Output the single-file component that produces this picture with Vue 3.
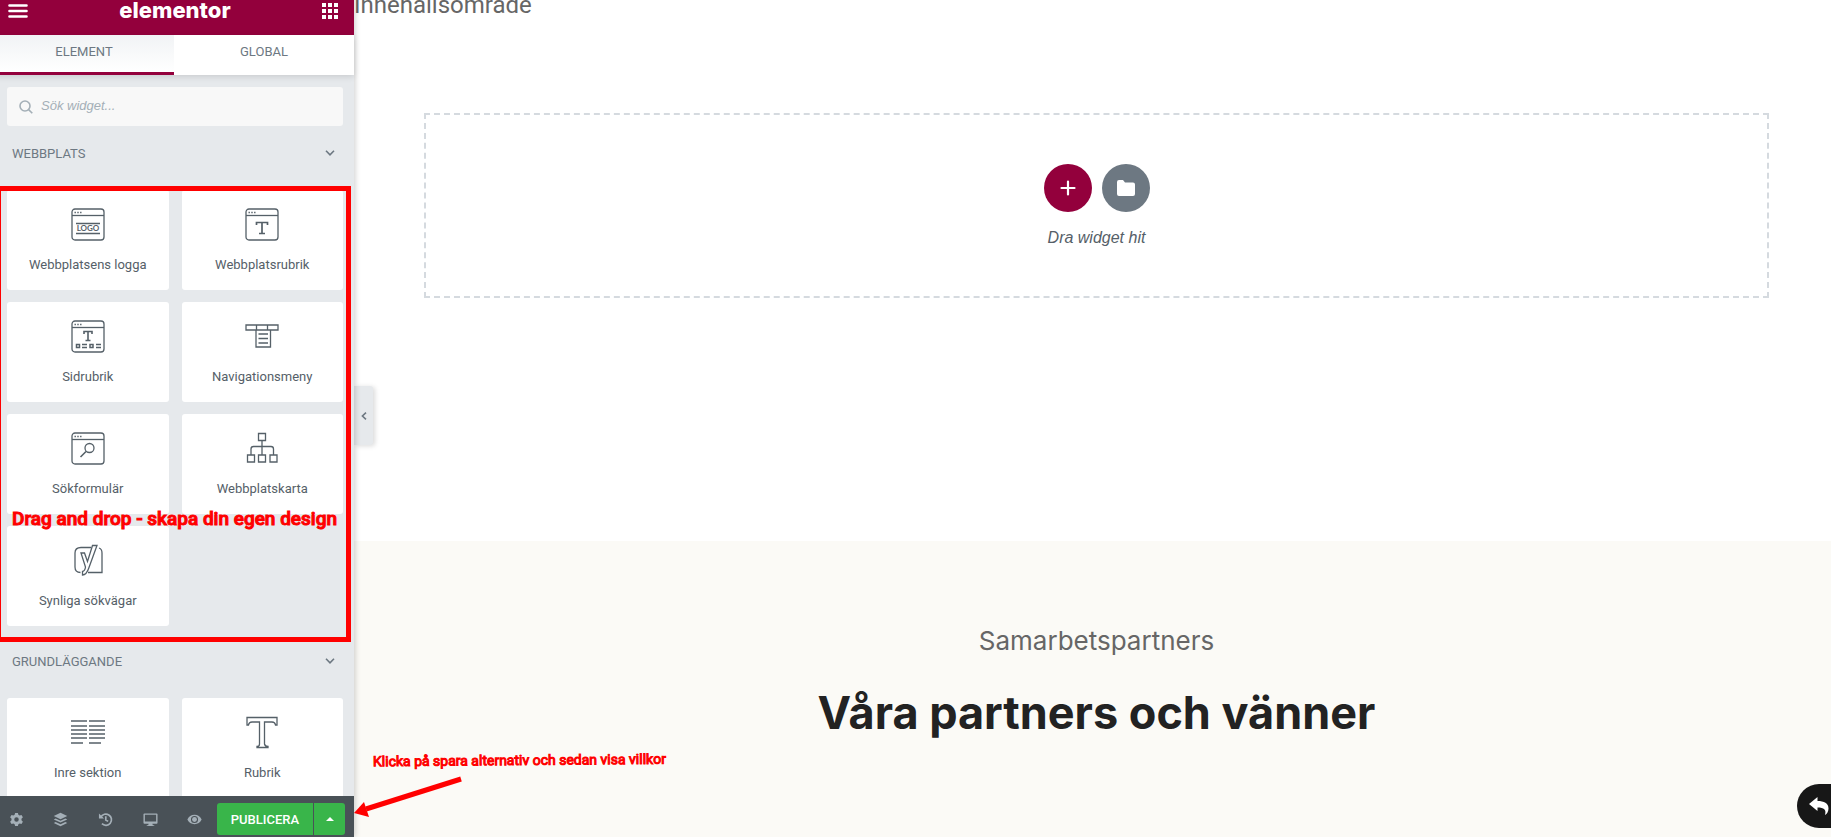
<script setup>
  import { ref } from 'vue'
  import { computed } from 'vue'

  const activeTab = ref('element')
  const searchQuery = ref('')

  // browser window outline shared by several widget icons
  const frame = '<rect x="1" y="1" width="32" height="31" rx="3"/><path d="M1 7.5H33"/><path d="M3.5 4.5h1.4M6.3 4.5h1.4M9.1 4.5h1.4"/>'
  const serifT = 'M11.5 17V14.5H22.500V17M17 14.500V25.500M14 25.500H20'

  const icons = {
    logo: frame + '<path d="M5 15.500H29M5 25.500H29"/><text x="17" y="23.200" text-anchor="middle" font-family="Lato, sans-serif" font-size="8" font-weight="700" fill="#556068" stroke="none">LOGO</text>',
    title: frame + `<path stroke-width="1.700" d="${serifT}"/>`,
    page: frame + '<path stroke-width="1.600" d="M13 14V11.500H21V14M17 11.500V20.500M14.500 20.500H19.500"/><path stroke-width="1.500" d="M5.500 24.500h3v3h-3zM19 24.500h3v3h-3zM11 24.500h5M11 27.500h5M25 24.500h5M25 27.500h5"/>',
    nav: '<path d="M1 5H33V10H1zM11.500 5V10M22.500 5V10M11 10V27H25.500V10M13.500 14H23M13.500 18.500H23M13.500 23H23"/>',
    search: frame + '<circle cx="18.500" cy="16" r="4.500"/><path stroke-width="1.600" d="M15 19.500L9.500 25"/>',
    sitemap: '<path d="M13.500 1.500h7v7h-7zM2.500 23h7v7h-7zM13.500 23h7v7h-7zM25 23h7v7h-7zM17 8.500V23M6 23V17Q6 14.500 8.500 14.500H26Q28.500 14.500 28.500 17V23"/>',
    yoast: '<path d="M20 3.500H10Q4 3.500 4 9V23Q4 28.500 9.500 28.500M17 28.500H31V9Q31 5 28 4"/><path d="M10 9H13.500L16.500 17.500L21.500 1.500H26L18 23.500Q15.500 31 11.500 31V27.500Q14 27 14.500 23Z"/>',
    columns: '<path d="M0 5H16M0 10H16M0 14H16M0 18H16M0 22H16M0 27H12M18 5H34M18 10H34M18 14H34M18 18H34M18 22H34M18 27H30"/>',
    heading: '<path d="M2 1.500H32V9H30.500Q30 6 27 6H19.500V28Q20 30.500 23 30.500V31.500H12V30.500Q14.500 30.500 14.500 28V6H7Q4 6 3.500 9H2Z"/>'
  }

  const categories = ref([
    {
      name: 'Webbplats',
      widgets: [
        { label: 'Webbplatsens logga', icon: 'logo' },
        { label: 'Webbplatsrubrik', icon: 'title' },
        { label: 'Sidrubrik', icon: 'page' },
        { label: 'Navigationsmeny', icon: 'nav' },
        { label: 'Sökformulär', icon: 'search' },
        { label: 'Webbplatskarta', icon: 'sitemap' },
        { label: 'Synliga sökvägar', icon: 'yoast' }
      ]
    },
    {
      name: 'Grundläggande',
      widgets: [
        { label: 'Inre sektion', icon: 'columns' },
        { label: 'Rubrik', icon: 'heading' }
      ]
    }
  ])

  // show matched widgets
  const filteredCategories = computed(() => {
    const query = searchQuery.value.toLowerCase()
    return categories.value.map((category) => {
      return {
        name: category.name,
        widgets: category.widgets.filter((widget) => widget.label.toLowerCase().includes(query))
      }
    })
  })

  const tools = [
    { name: 'Inställningar', svg: '<path fill-rule="evenodd" d="M6.500 1h3l.5 2 1.300.7 2-.6 1.500 2.600-1.500 1.500v1.600l1.500 1.500-1.500 2.600-2-.6-1.300.7-.5 2h-3l-.5-2-1.300-.7-2 .6-1.500-2.600 1.500-1.500V7.200L1.200 5.700l1.500-2.600 2 .6L6 3zM8 5.600a2.400 2.400 0 1 0 0 4.800 2.400 2.400 0 0 0 0-4.800z"/>' },
    { name: 'Navigator', svg: '<path d="M8 .8L15.200 4.200 8 7.600.8 4.200zM2.800 6.900L8 9.300l5.200-2.400 2 1L8 11.300.8 7.900zM2.800 10.600L8 13l5.200-2.400 2 1L8 15.200.8 11.600z"/>' },
    { name: 'Historik', svg: '<path fill="none" stroke="currentColor" stroke-width="1.800" d="M3 5.500A6 6 0 1 1 4.200 12.500M8.300 4.500V8.500L10.800 10"/><path d="M1 1.500V7H6.500z"/>' },
    { name: 'Responsivt läge', svg: '<path fill-rule="evenodd" d="M1.500 1.500h13q1 0 1 1v9q0 1-1 1H10l.5 1.500H12V15H4v-1h1.500L6 12.500H1.500q-1 0-1-1v-9q0-1 1-1zM2 3v7h12V3z"/>' },
    { name: 'Förhandsgranska', svg: '<path fill-rule="evenodd" d="M8 3C4.500 3 1.800 5 .4 8 1.800 11 4.500 13 8 13s6.200-2 7.600-5C14.200 5 11.500 3 8 3zm0 1.200a3.800 3.800 0 1 1 0 7.600 3.800 3.800 0 0 1 0-7.600z"/><circle cx="8" cy="8" r="2.600"/>' }
  ]
</script>

<template>
  <div class="editor">
    <aside class="panel">
      <header class="panel-header">
        <button type="button" class="header-button" aria-label="Meny">
          <svg width="20" height="14" viewBox="0 0 20 14"><path d="M1.500 1.500H18.500M1.500 7H18.500M1.500 12.500H18.500" stroke="#fff" stroke-width="2.600" stroke-linecap="round" /></svg>
        </button>
        <span class="logo">elementor</span>
        <button type="button" class="header-button" aria-label="Widgetar">
          <svg width="16" height="16" viewBox="0 0 16 16" fill="#fff"><path d="M0 0h4v4H0zM6 0h4v4H6zM12 0h4v4h-4zM0 6h4v4H0zM6 6h4v4H6zM12 6h4v4h-4zM0 12h4v4H0zM6 12h4v4H6zM12 12h4v4h-4z" /></svg>
        </button>
      </header>

      <nav class="tabs">
        <button type="button" class="tab" :class="{ active: activeTab === 'element' }" @click="activeTab = 'element'">Element</button>
        <button type="button" class="tab" :class="{ active: activeTab === 'global' }" @click="activeTab = 'global'">Global</button>
      </nav>

      <div class="panel-body">
        <label class="search">
          <svg width="14" height="14" viewBox="0 0 14 14" fill="none" stroke="#a4afb7" stroke-width="1.600"><circle cx="6" cy="6" r="5" /><path d="M9.600 9.600L13.300 13.300" /></svg>
          <input v-model="searchQuery" type="text" placeholder="Sök widget..." aria-label="Sök widget" />
        </label>

        <section v-for="category in filteredCategories" :key="category.name">
          <button type="button" class="category-title">
            {{ category.name }}
            <svg width="10" height="6" viewBox="0 0 10 6" fill="none" stroke="currentColor" stroke-width="1.600"><path d="M1 .8L5 4.800L9 .8" /></svg>
          </button>
          <div class="widgets">
            <button v-for="widget in category.widgets" :key="widget.label" type="button" class="widget">
              <svg class="widget-icon" viewBox="0 0 34 33" v-html="icons[widget.icon]"></svg>
              <span>{{ widget.label }}</span>
            </button>
          </div>
        </section>
      </div>

      <footer class="panel-footer">
        <div class="tools">
          <button v-for="tool in tools" :key="tool.name" type="button" class="tool" :aria-label="tool.name">
            <svg width="15" height="15" viewBox="0 0 16 16" fill="currentColor" v-html="tool.svg"></svg>
          </button>
        </div>
        <button type="button" class="publish">Publicera</button>
        <button type="button" class="publish-more" aria-label="Spara alternativ">
          <svg width="8" height="4" viewBox="0 0 8 4"><path d="M0 4L4 0L8 4z" fill="#fff" /></svg>
        </button>
      </footer>
    </aside>

    <main class="preview">
      <section class="content-section">
        <p class="area-name">Innehållsområde</p>
        <div class="drop-area">
          <div class="drop-buttons">
            <button type="button" class="round add" aria-label="Lägg till sektion">
              <svg width="16" height="16" viewBox="0 0 16 16"><path d="M8 1.500V14.500M1.500 8H14.500" stroke="#fff" stroke-width="2.200" stroke-linecap="round" /></svg>
            </button>
            <button type="button" class="round folder" aria-label="Lägg till mall">
              <svg width="18" height="16" viewBox="0 0 18 16"><path d="M2 0H6L8 2.500H16Q18 2.500 18 4.500V14Q18 16 16 16H2Q0 16 0 14V2Q0 0 2 0Z" fill="#fff" /></svg>
            </button>
          </div>
          <p class="drop-text">Dra widget hit</p>
        </div>
      </section>
      <section class="partners">
        <p class="partners-label">Samarbetspartners</p>
        <h2>Våra partners och vänner</h2>
      </section>

      <button type="button" class="collapse" aria-label="Dölj panel">
        <svg width="6" height="8" viewBox="0 0 6 8" fill="none" stroke="#6d7882" stroke-width="1.600"><path d="M5 .6L1.400 4L5 7.400" /></svg>
      </button>
      <a href="#" class="back" aria-label="Tillbaka">
        <svg width="20" height="18" viewBox="0 0 20 18"><path d="M0 7L8.500 0V4C15 4 19.500 6 19.500 11.500C19.500 14.500 18 16.800 16 18C17.500 12.500 15 10.500 8.500 10.500V14Z" fill="#fff" /></svg>
      </a>
    </main>

    <!-- instruction notes lying over the editor -->
    <div class="note-frame"></div>
    <p class="note note-drag">Drag and drop - skapa din egen design</p>
    <p class="note note-save">Klicka på spara alternativ och sedan visa villkor</p>
    <svg class="note-arrow" width="110" height="44" viewBox="0 0 110 44"><path d="M107 5L12 35" stroke="#f00" stroke-width="5" /><path d="M0 39L10 28L15 43Z" fill="#f00" /></svg>
  </div>
</template>

<style>
body {
  margin: 0;
  background: #fff;
}
</style>

<style scoped>
.editor {
  position: relative;
  display: flex;
  height: 100vh;
  overflow: hidden;
  font-family: Roboto, sans-serif;
}

button {
  margin: 0;
  padding: 0;
  border: none;
  background: none;
  font-family: inherit;
  cursor: pointer;
}

p,
h2 {
  margin: 0;
}

/* the panel is scrolled slightly past the window's top left corner */
.panel {
  display: flex;
  flex-direction: column;
  flex: none;
  width: 360px;
  margin: -13px 0 0 -6px;
  background: #e6e9ec;
  box-shadow: 1px 0 6px rgba(0, 0, 0, 0.2);
  z-index: 1;
}

.panel-header {
  display: flex;
  justify-content: space-between;
  align-items: center;
  flex: none;
  height: 48px;
  padding: 0 16px 0 14px;
  background: #93003c;
}

.header-button {
  display: flex;
}

.logo {
  padding-bottom: 2px;
  color: #fff;
  font-family: Inter, sans-serif;
  font-size: 22px;
  line-height: 24px;
  font-weight: 800;
}

.tabs {
  display: flex;
  flex: none;
  height: 40px;
  background: #fff;
  box-shadow: 0 2px 6px rgba(0, 0, 0, 0.12);
}

.tab {
  flex: 1;
  padding-bottom: 4px;
  border-bottom: 3px solid transparent;
  color: #6d7882;
  font-size: 13px;
  text-transform: uppercase;
}

.tab.active {
  background: linear-gradient(#f1f3f5, #fff);
  border-bottom-color: #93003c;
}

.panel-body {
  flex: 1;
  min-height: 0;
  overflow: hidden;
  padding: 12px 11px 0 13px;
}

.search {
  display: flex;
  align-items: center;
  gap: 8px;
  height: 39px;
  padding: 0 12px;
  border-radius: 3px;
  background: #f8f8f8;
}

.search input {
  flex: 1;
  min-width: 0;
  padding: 0 0 2px;
  border: none;
  outline: none;
  background: none;
  font: italic 13px "Liberation Sans", sans-serif;
}

.search input::placeholder {
  color: #a4afb7;
}

.category-title {
  display: flex;
  justify-content: space-between;
  align-items: center;
  width: 100%;
  height: 54px;
  padding: 0 8px 0 5px;
  color: #6d7882;
  font-size: 13px;
  text-transform: uppercase;
}

.widgets {
  display: grid;
  grid-template-columns: 1fr 1fr;
  gap: 12px 13px;
  padding: 10px 0 8px;
}

.widget {
  display: flex;
  flex-direction: column;
  align-items: center;
  gap: 14px;
  height: 100px;
  padding-top: 18px;
  border-radius: 3px;
  background: #fff;
  color: #556068;
  font-size: 13px;
  line-height: 20px;
}

.widget-icon {
  flex: none;
  width: 34px;
  height: 33px;
  fill: none;
  stroke: #556068;
  stroke-width: 1.3;
}

.panel-footer {
  display: flex;
  align-items: center;
  flex: none;
  height: 36px;
  padding: 5px 9px 0 0;
  background: #495157;
}

.tools {
  display: flex;
  flex: 1;
}

.tool {
  display: flex;
  justify-content: center;
  flex: 1;
  color: #a4afb7;
}

.publish,
.publish-more {
  height: 32px;
  background: #39b54a;
  color: #fff;
}

.publish {
  width: 96px;
  border-radius: 3px 0 0 3px;
  font-size: 13px;
  font-weight: 500;
  text-transform: uppercase;
}

.publish-more {
  display: flex;
  justify-content: center;
  align-items: center;
  width: 31px;
  margin-left: 1px;
  border-radius: 0 3px 3px 0;
}

.preview {
  position: relative;
  display: flex;
  flex-direction: column;
  flex: 1;
  min-width: 0;
}

.content-section {
  flex: none;
  padding-bottom: 243px;
}

.area-name {
  margin-top: -9px;
  color: #666;
  font-size: 24px;
  line-height: 28px;
}

.drop-area {
  margin: 94px 62px 0 70px;
  padding: 49px 0;
  border: 2px dashed #d5dadf;
  text-align: center;
}

.drop-buttons {
  display: flex;
  justify-content: center;
  gap: 10px;
}

.round {
  display: flex;
  justify-content: center;
  align-items: center;
  width: 48px;
  height: 48px;
  border-radius: 50%;
}

.add {
  background: #93003c;
}

.folder {
  background: #6d7882;
}

.drop-text {
  margin-top: 16px;
  margin-bottom: -1px;
  color: #556068;
  font: italic 16px/20px "Liberation Sans", sans-serif;
}

.partners {
  flex: 1;
  padding: 82px 62px 0 70px;
  background: #fbfaf6;
  text-align: center;
  font-family: Inter, sans-serif;
}

.partners-label {
  color: #666;
  font-size: 26px;
  line-height: 36px;
}

.partners h2 {
  margin-top: 24px;
  color: #222;
  font-size: 45px;
  line-height: 60px;
  font-weight: 700;
}

.collapse {
  position: absolute;
  top: 386px;
  left: 0;
  display: flex;
  justify-content: center;
  align-items: center;
  width: 19px;
  height: 59px;
  border-radius: 0 3px 3px 0;
  background: #e6e9ec;
  box-shadow: 2px 1px 5px rgba(0, 0, 0, 0.15);
}

.back {
  position: absolute;
  right: 0;
  bottom: 9px;
  display: flex;
  align-items: center;
  width: 22px;
  height: 44px;
  padding-left: 12px;
  border-radius: 22px 0 0 22px;
  background: #171717;
}

.note-frame {
  position: absolute;
  top: 186px;
  left: -4px;
  z-index: 2;
  box-sizing: border-box;
  width: 355px;
  height: 456px;
  border: 5px solid #f00;
  pointer-events: none;
}

.note {
  position: absolute;
  z-index: 3;
  color: #f00;
  white-space: nowrap;
  -webkit-text-stroke: 1px #f00;
}

.note-drag {
  top: 507px;
  left: 12px;
  font-size: 19px;
  line-height: 24px;
  font-weight: 500;
}

.note-save {
  bottom: 67px;
  left: 373px;
  font-size: 14px;
  line-height: 20px;
  transform: rotate(-0.5deg);
}

.note-arrow {
  position: absolute;
  bottom: 19px;
  left: 354px;
  z-index: 3;
}
</style>
